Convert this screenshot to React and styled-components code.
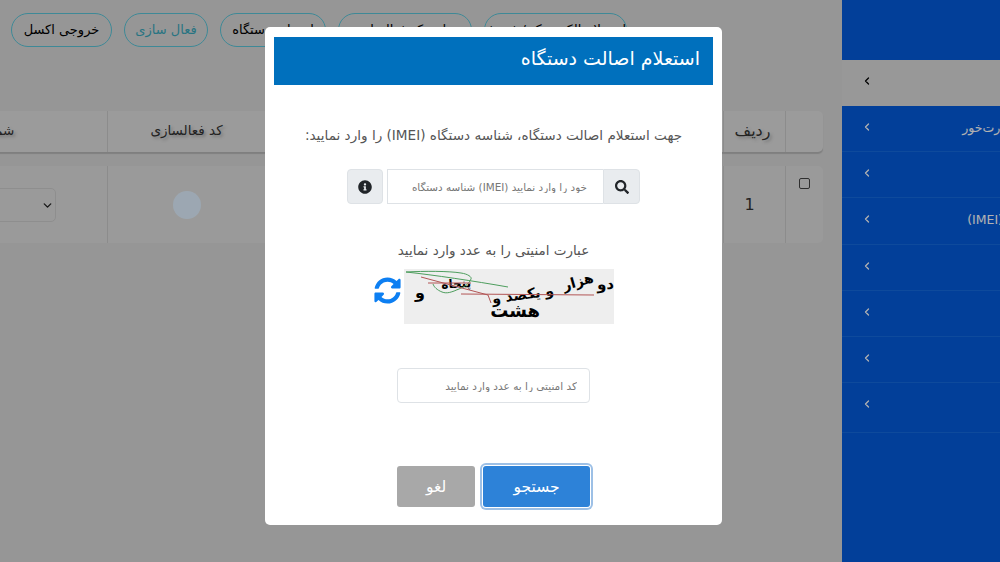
import React from 'react';
import styled, { createGlobalStyle } from 'styled-components';
import { ChevronLeft, ChevronDown } from 'lucide-react';
import { FaSearch, FaInfoCircle, FaSyncAlt } from 'react-icons/fa';

const GlobalStyle = createGlobalStyle`
  html, body {
    margin: 0;
    padding: 0;
    height: 100%;
    overflow: hidden;
    background: #d6d6d6;
    font-family: "DejaVu Sans", "Noto Sans", sans-serif;
  }
`;

const Page = styled.div`
  direction: rtl;
  display: flex;
  width: 1000px;
  height: 562px;
  overflow: hidden;
  background: #d7d7d7;
`;

const Sidebar = styled.aside`
  flex: 0 0 158px;
  height: 562px;
  overflow: hidden;
  background: #045bdc;
`;

const SideTop = styled.div`
  height: 60px;
`;

const SideItem = styled.div`
  box-sizing: border-box;
  display: flex;
  justify-content: space-between;
  align-items: flex-start;
  height: ${props => props.$height}px;
  padding: 14px 0 0 19px;
  background: ${props => (props.$active ? '#dadada' : 'transparent')};
  border-bottom: ${props => (props.$active ? 'none' : '1px solid #156ae0')};
  color: ${props => (props.$active ? '#000' : '#fff')};
  font-size: 12.5px;
  line-height: 16px;
  white-space: nowrap;

  svg {
    margin-top: 1px;
  }
`;

const SideLabel = styled.span`
  margin-right: ${props => props.$shift}px;
`;

const Main = styled.main`
  flex: 0 0 842px;
  height: 562px;
  overflow: hidden;
  box-sizing: border-box;
  padding: 13px 19px 0 0;
`;

const Toolbar = styled.div`
  display: flex;
  direction: ltr;
  gap: 12px;
  margin-left: 11px;
`;

const Pill = styled.div`
  box-sizing: border-box;
  flex: 0 0 ${props => props.$width}px;
  height: 34px;
  line-height: 31px;
  direction: rtl;
  text-align: center;
  border: 1px solid #5ac5d8;
  border-radius: 17px;
  color: ${props => (props.$accent ? '#3aa7bb' : '#000')};
  font-size: 13px;
  white-space: nowrap;
  overflow: hidden;
`;

const TableRow = styled.div`
  display: grid;
  grid-template-columns: 38px 62px 458px 158px 264px;
  width: max-content;
  border-radius: 5px;
  background: ${props => (props.$head ? '#dedede' : '#dddddd')};
  box-shadow: ${props => (props.$head ? '0 2px 1px #b7b7b7' : 'none')};
  margin-top: ${props => (props.$head ? '64px' : '14px')};
  height: ${props => (props.$head ? '41px' : '77px')};
`;

const Cell = styled.div`
  display: flex;
  align-items: center;
  justify-content: center;
  border-left: 1px solid #c9c9c9;
  color: #333;
  font-size: ${props => props.$size || 14}px;
  text-shadow: ${props => (props.$head ? '2px 2px 3px #aaa' : 'none')};
  white-space: nowrap;
  padding-bottom: ${props => (props.$head ? '3px' : '0')};
  padding-right: ${props => props.$offset || 0}px;
`;

const CheckBox = styled.span`
  box-sizing: border-box;
  width: 11px;
  height: 11px;
  margin-bottom: 42px;
  border: 1px solid #444;
  border-radius: 2px;
`;

const Dot = styled.span`
  width: 28px;
  height: 28px;
  border-radius: 50%;
  background: #e0f0ff;
`;

const SelectBox = styled.div`
  box-sizing: border-box;
  display: flex;
  align-items: center;
  width: 160px;
  height: 34px;
  margin-top: 1px;
  padding-right: 1px;
  border: 1px solid #cccccc;
  border-radius: 5px;
  color: #222;
`;

const Backdrop = styled.div`
  position: fixed;
  inset: 0;
  background: rgba(0, 0, 0, 0.3);
`;

const Modal = styled.section`
  position: fixed;
  top: 27px;
  left: 265px;
  box-sizing: border-box;
  display: flex;
  flex-direction: column;
  align-items: center;
  width: 457px;
  height: 498px;
  padding: 10px 9px 0;
  background: #fff;
  border-radius: 5px;
  direction: rtl;
`;

const ModalHead = styled.h2`
  box-sizing: border-box;
  width: 100%;
  height: 48px;
  margin: 0;
  padding: 0 13px;
  background: #0070bd;
  color: #fff;
  font-size: 19px;
  font-weight: 400;
  line-height: 43px;
`;

const Intro = styled.p`
  margin: 40px 0 0;
  color: #555;
  font-size: 13.6px;
  line-height: 20px;
`;

const SearchGroup = styled.div`
  display: flex;
  margin-top: 24px;
  height: 35px;
`;

const AddonButton = styled.button`
  box-sizing: border-box;
  display: flex;
  align-items: center;
  justify-content: center;
  width: ${props => props.$width}px;
  height: 35px;
  padding: 0;
  background: #e9ecef;
  border: 1px solid #dee2e6;
  border-radius: ${props => props.$radius};
  color: #212529;
  font-size: 14px;
`;

const SearchInput = styled.input`
  box-sizing: border-box;
  width: 216px;
  height: 35px;
  margin-left: 4px;
  padding: 0 16px;
  border: 1px solid #dee2e6;
  border-right: none;
  outline: none;
  font-family: inherit;
  font-size: 10.4px;
  direction: rtl;

  &::placeholder {
    color: #777;
  }
`;

const CaptchaLabel = styled.div`
  margin-top: 36px;
  color: #555;
  font-size: 13.5px;
  line-height: 20px;
`;

const CaptchaRow = styled.div`
  display: flex;
  align-items: flex-start;
  direction: ltr;
  gap: 3px;
  margin-top: 9px;
  color: #0d7ff2;

  > svg:first-child {
    margin-top: 8px;
  }
`;

const CodeInput = styled.input`
  box-sizing: border-box;
  width: 193px;
  height: 35px;
  margin-top: 44px;
  padding: 0 12px;
  border: 1px solid #dee2e6;
  border-radius: 4px;
  outline: none;
  font-family: inherit;
  font-size: 10.5px;
  direction: rtl;

  &::placeholder {
    color: #777;
  }
`;

const Actions = styled.div`
  display: flex;
  gap: 8px;
  margin-top: 63px;
`;

const ActionButton = styled.button`
  box-sizing: border-box;
  width: ${props => props.$width}px;
  height: 41px;
  padding: 0;
  border: none;
  border-radius: 3px;
  background: ${props => (props.$primary ? '#2d82d8' : '#a8a8a8')};
  box-shadow: ${props => (props.$primary ? '0 0 0 1px #fff, 0 0 0 3px #9dc0e6' : 'none')};
  color: #fff;
  font-family: inherit;
  font-size: 15.5px;
`;

const sideItems = [
  { height: 46, active: true, label: '', shift: 0 },
  { height: 46, label: 'کارت‌خور', shift: -10 },
  { height: 46, label: '', shift: 0 },
  { height: 47, label: '(IMEI)', shift: -3 },
  { height: 46, label: '', shift: 0 },
  { height: 46, label: '', shift: 0 },
  { height: 46, label: '', shift: 0 },
  { height: 50, label: '', shift: 0 },
];

const pills = [
  { text: 'خروجی اکسل', width: 101 },
  { text: 'فعال سازی', width: 84, accent: true },
  { text: 'انتساب دستگاه', width: 106 },
  { text: 'تعلیق کد فعالسازی', width: 134 },
  { text: 'استعلام الکترونیک / فروش', width: 143 },
];

function Captcha() {
  return (
    <svg width="210" height="55" viewBox="0 0 210 55" direction="rtl">
      <rect width="210" height="55" fill="#eeeeee" />
      <g fill="#000" fontFamily="DejaVu Sans, sans-serif" fontWeight="700">
        <text x="210" y="21" fontSize="15" transform="rotate(-4 190 18)">دو</text>
        <text x="190" y="20" fontSize="14" transform="rotate(-16 165 15)">هزار</text>
        <text x="150" y="31" fontSize="14" transform="rotate(-8 115 25)">و یکصد و</text>
        <text x="67" y="19" fontSize="12" transform="rotate(-3 50 15)">پنجاه</text>
        <text x="21" y="29" fontSize="16">و</text>
        <text x="136" y="48" fontSize="18">هشت</text>
      </g>
      <g fill="none" strokeWidth="1">
        <path d="M2 3 C30 6 70 12 104 18" stroke="#4e9e5e" />
        <path d="M2 3 C20 2 45 2 57 4 C64 5 68 8 67 10 C65 15 60 18 55 20 C48 23 43 25 38 23 C33 21 30 18 29 15" stroke="#4e9e5e" />
        <path d="M17 8 L84 26 L87 34" stroke="#b25555" />
        <path d="M57 25 L190 26" stroke="#b25555" />
        <path d="M24 14 L67 14" stroke="#b25555" />
      </g>
    </svg>
  );
}

export default function App() {
  return (
    <>
      <GlobalStyle />
      <Page>
        <Sidebar>
          <SideTop />
          {sideItems.map((item, i) => (
            <SideItem key={i} $height={item.height} $active={item.active}>
              <SideLabel $shift={item.shift}>{item.label}</SideLabel>
              <ChevronLeft size={12} strokeWidth={2.5} />
            </SideItem>
          ))}
        </Sidebar>
        <Main>
          <Toolbar>
            {pills.map(pill => (
              <Pill key={pill.text} $width={pill.width} $accent={pill.accent}>
                {pill.text}
              </Pill>
            ))}
          </Toolbar>
          <TableRow $head>
            <Cell $head />
            <Cell $head $size={16} $offset={4}>ردیف</Cell>
            <Cell $head />
            <Cell $head $size={13.5}>کد فعالسازی</Cell>
            <Cell $head $size={13.5}>شماره سریال</Cell>
          </TableRow>
          <TableRow>
            <Cell><CheckBox /></Cell>
            <Cell $size={16} $offset={10}>1</Cell>
            <Cell />
            <Cell><Dot /></Cell>
            <Cell>
              <SelectBox><ChevronDown size={13} strokeWidth={2.5} /></SelectBox>
            </Cell>
          </TableRow>
        </Main>
      </Page>
      <Backdrop />
      <Modal>
        <ModalHead>استعلام اصالت دستگاه</ModalHead>
        <Intro>جهت استعلام اصالت دستگاه، شناسه دستگاه (IMEI) را وارد نمایید:</Intro>
        <SearchGroup>
          <AddonButton $width={37} $radius="0 4px 4px 0"><FaSearch /></AddonButton>
          <SearchInput placeholder="خود را وارد نمایید (IMEI) شناسه دستگاه" />
          <AddonButton $width={36} $radius="4px"><FaInfoCircle /></AddonButton>
        </SearchGroup>
        <CaptchaLabel>عبارت امنیتی را به عدد وارد نمایید</CaptchaLabel>
        <CaptchaRow>
          <FaSyncAlt size={27} />
          <Captcha />
        </CaptchaRow>
        <CodeInput placeholder="کد امنیتی را به عدد وارد نمایید" />
        <Actions>
          <ActionButton $primary $width={107}>جستجو</ActionButton>
          <ActionButton $width={78}>لغو</ActionButton>
        </Actions>
      </Modal>
    </>
  );
}
